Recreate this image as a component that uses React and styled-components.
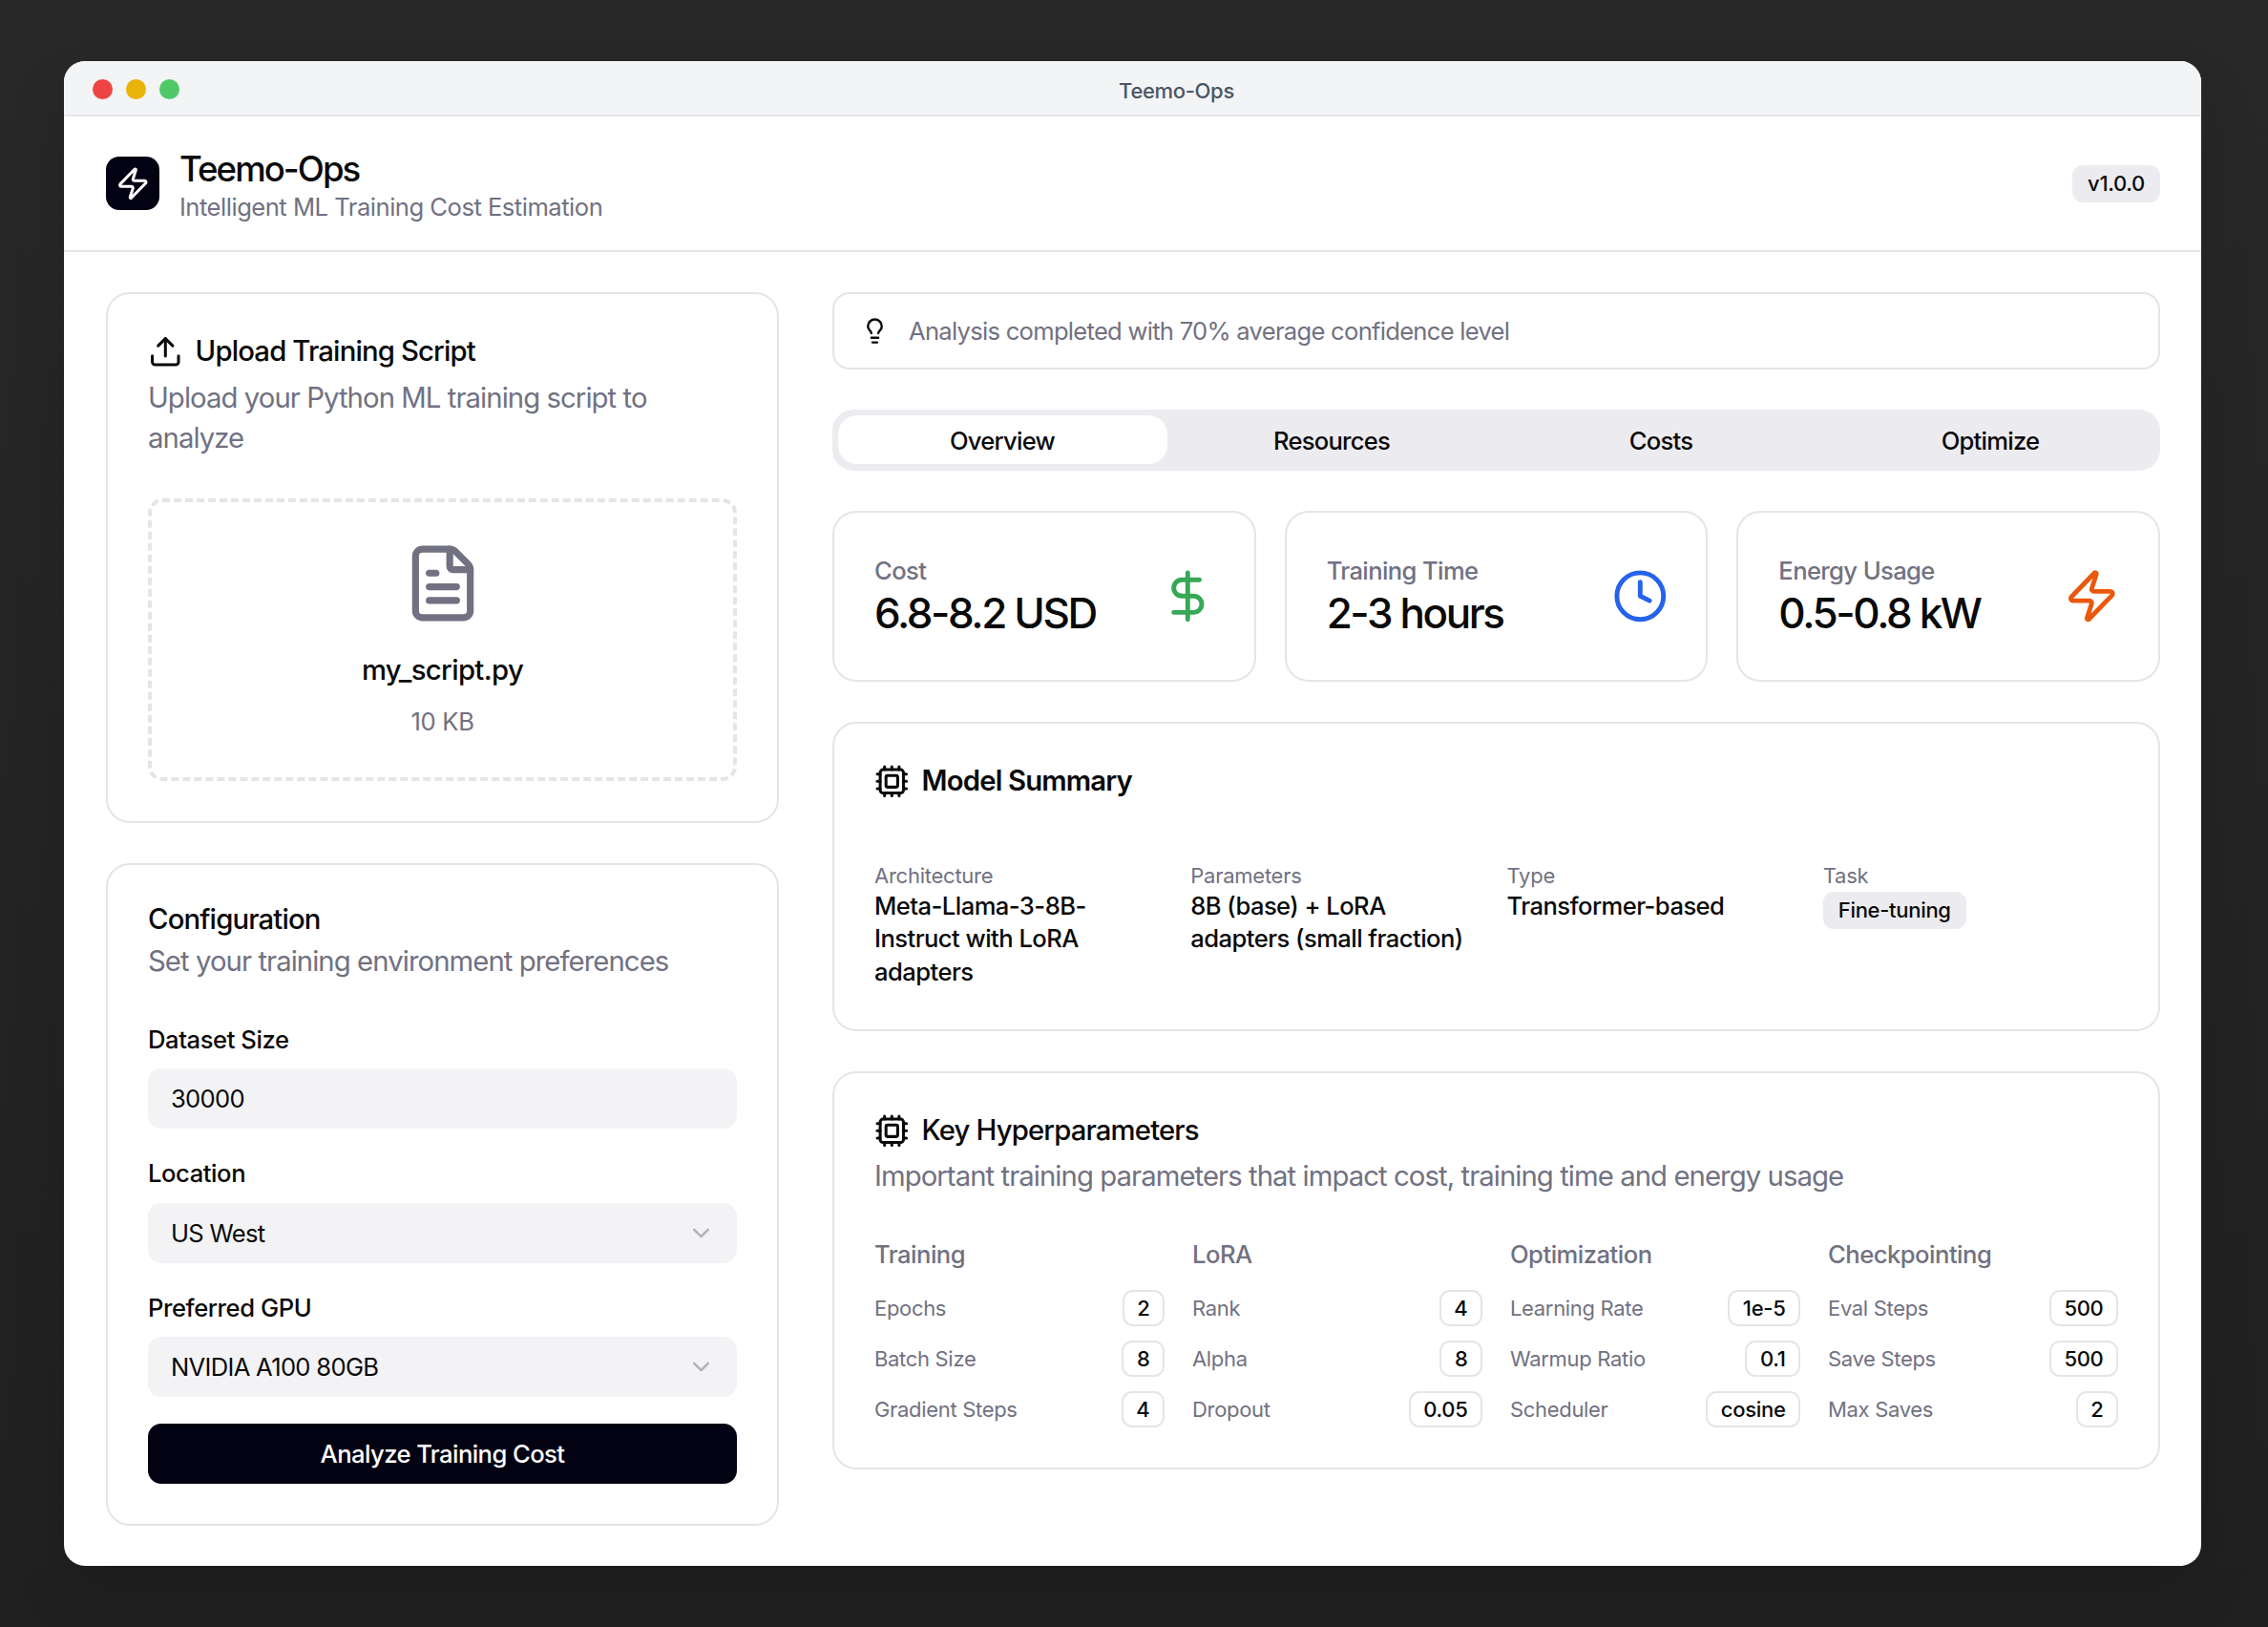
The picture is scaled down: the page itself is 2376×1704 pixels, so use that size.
import React from "react";
import styled, { createGlobalStyle } from "styled-components";
import { ChevronDown, Clock, Cpu, DollarSign, FileText, Lightbulb, Upload, Zap } from "lucide-react";

const hyperparameters = [
  { title: "Training", rows: [["Epochs", "2"], ["Batch Size", "8"], ["Gradient Steps", "4"]] },
  { title: "LoRA", rows: [["Rank", "4"], ["Alpha", "8"], ["Dropout", "0.05"]] },
  { title: "Optimization", rows: [["Learning Rate", "1e-5"], ["Warmup Ratio", "0.1"], ["Scheduler", "cosine"]] },
  { title: "Checkpointing", rows: [["Eval Steps", "500"], ["Save Steps", "500"], ["Max Saves", "2"]] },
];

const stats = [
  { label: "Cost", value: "6.8-8.2 USD", Icon: DollarSign, color: "#37a854" },
  { label: "Training Time", value: "2-3 hours", Icon: Clock, color: "#2563eb" },
  { label: "Energy Usage", value: "0.5-0.8 kW", Icon: Zap, color: "#ea580c" },
];

const tabs = ["Overview", "Resources", "Costs", "Optimize"];

const App = () => {
  return (
    <Page>
      <GlobalStyle />
      <Window>
        <TitleBar>
          <Lights>
            <Light $color="#ef4444" />
            <Light $color="#eab308" />
            <Light $color="#4fc968" />
          </Lights>
          <WindowTitle>Teemo-Ops</WindowTitle>
        </TitleBar>

        <Header>
          <Brand>
            <Logo>
              <Zap size={36.6} color="#fff" />
            </Logo>
            <BrandText>
              <AppName>Teemo-Ops</AppName>
              <Tagline>Intelligent ML Training Cost Estimation</Tagline>
            </BrandText>
          </Brand>
          <Badge>v1.0.0</Badge>
        </Header>

        <Content>
          <Column>
            <Card>
              <CardTitle>
                <Upload size={36.6} />
                Upload Training Script
              </CardTitle>
              <CardDescription>Upload your Python ML training script to analyze</CardDescription>
              <DropZone>
                <FileText size={86} color="#717182" />
                <FileName>my_script.py</FileName>
                <FileSize>10 KB</FileSize>
              </DropZone>
            </Card>

            <Card>
              <CardTitle $tight>Configuration</CardTitle>
              <CardDescription>Set your training environment preferences</CardDescription>
              <Form>
                <Field>
                  <FieldLabel>Dataset Size</FieldLabel>
                  <Input>30000</Input>
                </Field>
                <Field>
                  <FieldLabel>Location</FieldLabel>
                  <Input>
                    US West
                    <ChevronDown size={29} color="#717182" opacity={0.5} />
                  </Input>
                </Field>
                <Field>
                  <FieldLabel>Preferred GPU</FieldLabel>
                  <Input>
                    NVIDIA A100 80GB
                    <ChevronDown size={29} color="#717182" opacity={0.5} />
                  </Input>
                </Field>
                <AnalyzeButton>Analyze Training Cost</AnalyzeButton>
              </Form>
            </Card>
          </Column>

          <Column>
            <Banner>
              <Lightbulb size={29} />
              <BannerText>Analysis completed with 70% average confidence level</BannerText>
            </Banner>

            <TabBar>
              {tabs.map((tab, i) => (
                <Tab key={tab} $active={i === 0}>
                  {tab}
                </Tab>
              ))}
            </TabBar>

            <StatGrid>
              {stats.map(({ label, value, Icon, color }) => (
                <StatCard key={label}>
                  <div>
                    <StatLabel>{label}</StatLabel>
                    <StatValue>{value}</StatValue>
                  </div>
                  <Icon size={58.6} color={color} />
                </StatCard>
              ))}
            </StatGrid>

            <Card>
              <CardTitle>
                <Cpu size={36.6} />
                <strong>Model Summary</strong>
              </CardTitle>
              <SummaryGrid>
                <div>
                  <SummaryLabel>Architecture</SummaryLabel>
                  <SummaryValue>Meta-Llama-3-8B-Instruct with LoRA adapters</SummaryValue>
                </div>
                <div>
                  <SummaryLabel>Parameters</SummaryLabel>
                  <SummaryValue>8B (base) + LoRA adapters (small fraction)</SummaryValue>
                </div>
                <div>
                  <SummaryLabel>Type</SummaryLabel>
                  <SummaryValue>Transformer-based</SummaryValue>
                </div>
                <div>
                  <SummaryLabel>Task</SummaryLabel>
                  <TaskBadge>Fine-tuning</TaskBadge>
                </div>
              </SummaryGrid>
            </Card>

            <Card>
              <CardTitle>
                <Cpu size={36.6} />
                Key Hyperparameters
              </CardTitle>
              <CardDescription>
                Important training parameters that impact cost, training time and energy usage
              </CardDescription>
              <ParamGrid>
                {hyperparameters.map((group) => (
                  <div key={group.title}>
                    <GroupTitle>{group.title}</GroupTitle>
                    <ParamList>
                      {group.rows.map(([name, value]) => (
                        <ParamRow key={name}>
                          <ParamName>{name}</ParamName>
                          <Chip>{value}</Chip>
                        </ParamRow>
                      ))}
                    </ParamList>
                  </div>
                ))}
              </ParamGrid>
            </Card>
          </Column>
        </Content>
      </Window>
    </Page>
  );
};

const GlobalStyle = createGlobalStyle`
  * {
    box-sizing: border-box;
  }
  html,
  body {
    margin: 0;
    background: #242424;
  }
  body {
    font-family: Inter, "Liberation Sans", sans-serif;
    color: #0a0a0a;
    font-size: 25.6px;
  }
`;
const Page = styled.div`
  width: 2376px;
  height: 1704px;
  padding: 64px 70px 64px 67px;
  background: linear-gradient(#282828, #202020);
  overflow: hidden;
`;
const Window = styled.div`
  height: 1576px;
  background: #fff;
  border-radius: 22px;
  overflow: hidden;
  box-shadow: 0 30px 60px rgba(0, 0, 0, 0.12);
`;
const TitleBar = styled.div`
  display: flex;
  align-items: center;
  height: 58px;
  padding: 2px 29px 0 30px;
  background: #f3f4f6;
  border-bottom: 2px solid #e5e7eb;
`;
const Lights = styled.div`
  display: flex;
  gap: 14px;
`;
const Light = styled.span`
  width: 21px;
  height: 21px;
  border-radius: 50%;
  background: ${(p) => p.$color};
`;
const WindowTitle = styled.div`
  flex: 1;
  padding-top: 3px;
  text-align: center;
  font-size: 22px;
  font-weight: 500;
  letter-spacing: -0.33px;
  color: #4b5563;
`;
const Header = styled.header`
  display: flex;
  align-items: center;
  justify-content: space-between;
  height: 142px;
  padding: 0 43px 0 44px;
  border-bottom: 2px solid #e5e5e5;
`;
const Brand = styled.div`
  display: flex;
  align-items: center;
  gap: 21px;
`;
const BrandText = styled.div`
  padding-top: 6px;
`;
const Logo = styled.div`
  display: flex;
  align-items: center;
  justify-content: center;
  width: 56px;
  height: 56px;
  border-radius: 14px;
  background: #030213;
`;
const AppName = styled.h1`
  margin: 0;
  font-size: 36.6px;
  line-height: 44px;
  font-weight: 500;
  letter-spacing: -1.95px;
`;
const Tagline = styled.p`
  margin: 0;
  font-size: 25.6px;
  line-height: 36.6px;
  letter-spacing: -0.5px;
  color: #717182;
`;
const Badge = styled.span`
  display: inline-flex;
  align-items: center;
  height: 39px;
  padding: 0 16px;
  border-radius: 11px;
  background: #ececf0;
  font-size: 22px;
  font-weight: 500;
  letter-spacing: -0.3px;
`;
const Content = styled.main`
  display: grid;
  grid-template-columns: 705px 1391px;
  column-gap: 56px;
  align-items: start;
  padding: 42px 43px 0 44px;
`;
const Column = styled.div`
  display: flex;
  flex-direction: column;
  gap: 42px;
`;
const Card = styled.section`
  padding: 42px;
  border: 2px solid #e5e5e5;
  border-radius: 25px;
  background: #fff;
`;
const CardTitle = styled.h2`
  display: flex;
  align-items: center;
  gap: 13px;
  margin: 0;
  font-size: 29.3px;
  font-weight: 500;
  letter-spacing: -0.85px;
  line-height: ${(p) => (p.$tight ? "29.3px" : "36.6px")};
  strong {
    font-weight: 600;
  }
`;
const CardDescription = styled.p`
  margin: 9px 0 0;
  font-size: 29.3px;
  line-height: 42.5px;
  letter-spacing: -0.93px;
  color: #717182;
`;
const DropZone = styled.div`
  display: flex;
  flex-direction: column;
  align-items: center;
  height: 296px;
  margin-top: 41px;
  padding-top: 42px;
  border: 4px dashed #e5e5e5;
  border-radius: 15px;
`;
const FileName = styled.div`
  margin-top: 26px;
  font-size: 29.3px;
  line-height: 44px;
  font-weight: 500;
  letter-spacing: -0.63px;
`;
const FileSize = styled.div`
  margin-top: 14px;
  font-size: 25.6px;
  line-height: 36.6px;
  letter-spacing: -0.3px;
  color: #717182;
`;
const Form = styled.div`
  display: flex;
  flex-direction: column;
  gap: 34px;
  margin-top: 48px;
`;
const Field = styled.div`
  display: flex;
  flex-direction: column;
  gap: 17.5px;
`;
const FieldLabel = styled.label`
  font-size: 25.6px;
  line-height: 25.6px;
  font-weight: 500;
  letter-spacing: -0.42px;
`;
const Input = styled.div`
  display: flex;
  align-items: center;
  justify-content: space-between;
  height: 63px;
  padding: 0 23px 0 24px;
  border-radius: 14px;
  background: #f3f3f5;
  font-size: 25.6px;
  letter-spacing: -0.7px;
`;
const AnalyzeButton = styled.button`
  height: 63px;
  margin-top: -6px;
  border: 0;
  border-radius: 14px;
  background: #030213;
  color: #fff;
  font-family: inherit;
  font-size: 25.6px;
  font-weight: 500;
  letter-spacing: -0.57px;
`;
const Banner = styled.div`
  display: flex;
  align-items: center;
  gap: 21px;
  height: 81px;
  padding: 0 28px;
  border: 2px solid #e5e5e5;
  border-radius: 18px;
`;
const BannerText = styled.span`
  font-size: 25.6px;
  letter-spacing: -0.73px;
  color: #717182;
`;
const TabBar = styled.div`
  display: grid;
  grid-template-columns: repeat(4, 1fr);
  align-items: center;
  height: 63.5px;
  padding: 0 5.5px;
  border-radius: 22px;
  background: #ececf0;
`;
const Tab = styled.div`
  display: flex;
  align-items: center;
  justify-content: center;
  height: 51px;
  padding-top: 1px;
  border-radius: 20px;
  background: ${(p) => (p.$active ? "#fff" : "transparent")};
  font-size: 25.6px;
  font-weight: 500;
  letter-spacing: -0.75px;
`;
const StatGrid = styled.div`
  display: grid;
  grid-template-columns: repeat(3, 1fr);
  gap: 30px;
`;
const StatCard = styled.div`
  display: flex;
  align-items: center;
  justify-content: space-between;
  height: 179px;
  padding: 0 40px 0 42px;
  border: 2px solid #e5e5e5;
  border-radius: 25px;
`;
const StatLabel = styled.div`
  font-size: 25.6px;
  line-height: 36px;
  font-weight: 500;
  letter-spacing: -0.62px;
  color: #717182;
`;
const StatValue = styled.div`
  font-size: 44px;
  line-height: 53px;
  font-weight: 500;
  letter-spacing: -2.4px;
`;
const SummaryGrid = styled.div`
  display: grid;
  grid-template-columns: repeat(4, 1fr);
  column-gap: 22px;
  margin-top: 66.5px;
`;
const SummaryLabel = styled.div`
  font-size: 22px;
  line-height: 29px;
  letter-spacing: -0.25px;
  color: #717182;
`;
const SummaryValue = styled.div`
  font-size: 25.6px;
  line-height: 34.7px;
  font-weight: 500;
  letter-spacing: -0.55px;
`;
const TaskBadge = styled.span`
  display: inline-flex;
  align-items: center;
  height: 39px;
  margin-top: 2px;
  padding: 0 16px;
  border-radius: 11px;
  background: #ececf0;
  font-size: 22px;
  font-weight: 500;
  letter-spacing: -0.3px;
`;
const ParamGrid = styled.div`
  display: grid;
  grid-template-columns: repeat(4, 1fr);
  column-gap: 29px;
  margin-top: 42px;
`;
const GroupTitle = styled.div`
  font-size: 25.6px;
  line-height: 36.6px;
  font-weight: 500;
  letter-spacing: -0.5px;
  color: #717182;
`;
const ParamList = styled.div`
  display: flex;
  flex-direction: column;
  gap: 15px;
  margin-top: 19px;
`;
const ParamRow = styled.div`
  display: flex;
  align-items: center;
  justify-content: space-between;
`;
const ParamName = styled.span`
  font-size: 22px;
  letter-spacing: -0.32px;
  color: #717182;
`;
const Chip = styled.span`
  display: inline-flex;
  align-items: center;
  height: 38px;
  padding: 0 13.5px;
  border: 2px solid #e5e5e5;
  border-radius: 11px;
  font-size: 22px;
  font-weight: 500;
  letter-spacing: -0.3px;
`;

export default App;
